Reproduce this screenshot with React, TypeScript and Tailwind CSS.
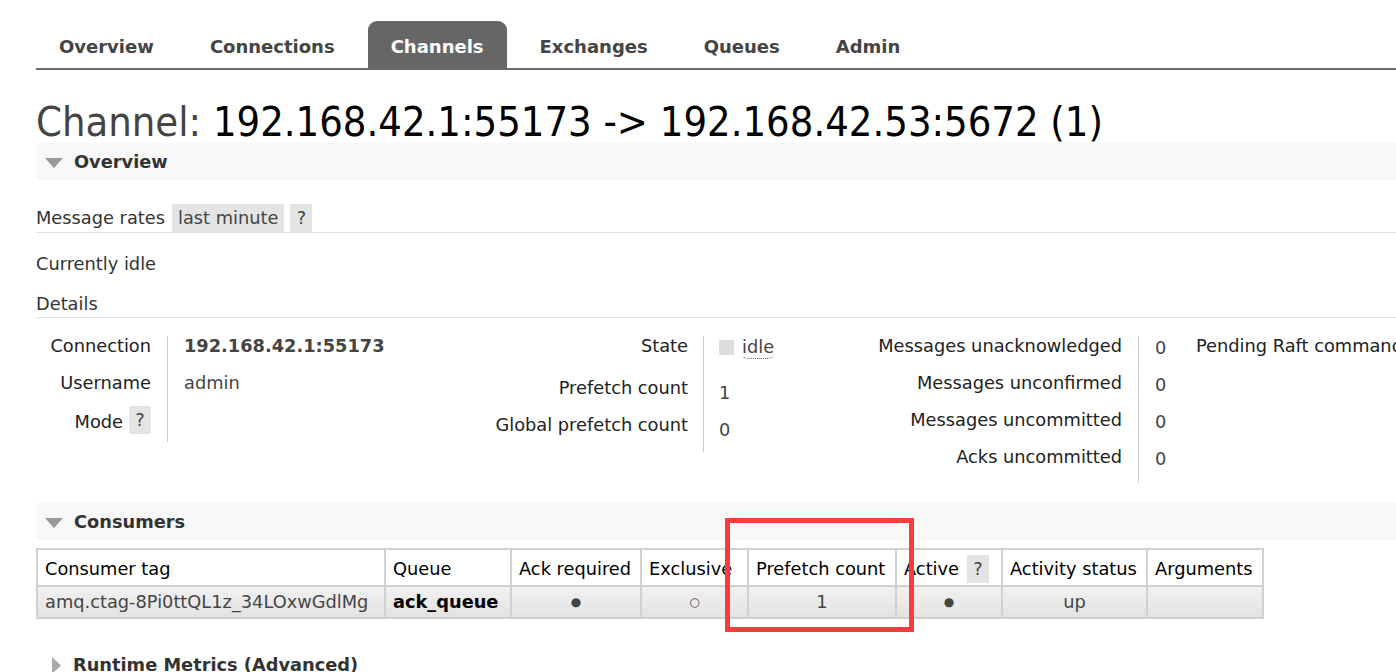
import React from "react";

const tabs = ["Overview", "Connections", "Channels", "Exchanges", "Queues", "Admin"];

function Help() {
  return (
    <span className="inline-flex h-[28px] w-[22px] items-center justify-center bg-[#e4e4e4] text-[#444]">
      ?
    </span>
  );
}

function SectionHeader({ title, open = true }: { title: string; open?: boolean }) {
  return (
    <div className={`flex h-[37px] items-center pt-[2px] ${open ? "bg-[#f8f8f8]" : ""}`}>
      {open ? (
        <svg width="18" height="10" viewBox="0 0 18 10" className="ml-[9px] mr-[11px]">
          <polygon points="0,0 18,0 9,10" fill="#999" />
        </svg>
      ) : (
        <svg width="9" height="17" viewBox="0 0 9 17" className="ml-[16px] mr-[12px]">
          <polygon points="0,0 9,8.5 0,17" fill="#aaa" />
        </svg>
      )}
      <span className="font-bold text-[#333]">{title}</span>
    </div>
  );
}

function Row({ h = 37, children }: { h?: number; children: React.ReactNode }) {
  return (
    <div className="leading-[20px]" style={{ height: h }}>
      {children}
    </div>
  );
}

export default function App() {
  const consumerCols = [
    { label: "Consumer tag", w: 348 },
    { label: "Queue", w: 126 },
    { label: "Ack required", w: 130 },
    { label: "Exclusive", w: 107 },
    { label: "Prefetch count", w: 148 },
    { label: "Active", w: 106, help: true },
    { label: "Activity status", w: 145 },
    { label: "Arguments", w: 116 },
  ];

  return (
    <div
      className="relative h-[672px] w-[1396px] overflow-hidden bg-white pl-[36px] text-[17.8px] text-[#333]"
      style={{ fontFamily: '"DejaVu Sans", Verdana, sans-serif' }}
    >
      {/* tabs */}
      <div className="flex h-[70px] items-end border-b-2 border-[#6a6a6a] pt-[21px]">
        {tabs.map((t) => (
          <div
            key={t}
            className={`mr-[10px] flex h-[47px] items-center rounded-t-[9px] px-[23px] pt-[3px] text-[18px] font-bold ${
              t === "Channels" ? "bg-[#666] text-white" : "text-[#444]"
            }`}
          >
            {t}
          </div>
        ))}
      </div>

      {/* title */}
      <h1
        className="mt-[29px] h-[44px] whitespace-nowrap text-[41.3px] leading-[46px] text-black"
        style={{ fontFamily: '"DejaVu Sans Condensed", "DejaVu Sans", sans-serif' }}
      >
        <span className="text-[#444]">Channel: </span>
        192.168.42.1:55173 -&gt; 192.168.42.53:5672 (1)
      </h1>

      <SectionHeader title="Overview" />

      <div className="mt-[24px] flex h-[29px] items-start border-b border-[#e0e0e0]">
        <span className="flex h-[28px] items-center pr-[7px] pt-[1px]">Message rates</span>
        <span className="mr-[6px] flex h-[28px] items-center bg-[#e4e4e4] px-[6px] pt-[1px] text-[#444]">
          last minute
        </span>
        <Help />
      </div>

      <div className="flex h-[60px] items-center pt-[2px]">Currently idle</div>

      <div className="flex h-[25px] items-start border-b border-[#e0e0e0] pt-[1px] leading-[20px]">
        Details
      </div>

      {/* details */}
      <div className="mt-[18px] flex whitespace-nowrap">
        <div className="w-[131px] shrink-0 pr-[16px] text-right text-[#222]">
          <Row>Connection</Row>
          <Row>Username</Row>
          <Row h={32}>
            <span className="inline-flex items-center">
              Mode <span className="-mt-[4px] ml-[6px]"><Help /></span>
            </span>
          </Row>
        </div>
        <div className="h-[106px] w-[253px] shrink-0 border-l border-[#ccc] pl-[16px] text-[#444]">
          <Row>
            <span className="font-bold">192.168.42.1:55173</span>
          </Row>
          <Row>admin</Row>
        </div>
        <div className="w-[283px] shrink-0 pr-[15px] text-right text-[#222]">
          <Row h={42}>State</Row>
          <Row>Prefetch count</Row>
          <Row>Global prefetch count</Row>
        </div>
        <div className="h-[116px] w-[137px] shrink-0 border-l border-[#ccc] pl-[15px] text-[#444]">
          <Row h={42}>
            <span className="inline-flex items-center">
              <span className="mr-[8px] inline-block h-[15px] w-[15px] bg-[#ddd]" />
              <span className="rounded-b-[6px] border-b border-dotted border-[#555] leading-[22px]">
                idle
              </span>
            </span>
          </Row>
          <Row>
            <div className="pt-[5px]">1</div>
          </Row>
          <Row>
            <div className="pt-[5px]">0</div>
          </Row>
        </div>
        <div className="w-[298px] shrink-0 pr-[16px] text-right text-[#222]">
          <Row>Messages unacknowledged</Row>
          <Row>Messages unconfirmed</Row>
          <Row>Messages uncommitted</Row>
          <Row>Acks uncommitted</Row>
        </div>
        <div className="h-[147px] w-[42px] shrink-0 border-l border-[#ccc] pl-[16px] text-[#444]">
          <Row><div className="pt-[2px]">0</div></Row>
          <Row><div className="pt-[2px]">0</div></Row>
          <Row><div className="pt-[2px]">0</div></Row>
          <Row><div className="pt-[2px]">0</div></Row>
        </div>
        <div className="shrink-0 pl-[16px] text-[#222]">
          <Row>Pending Raft commands</Row>
        </div>
      </div>

      <div className="mt-[19px]">
        <SectionHeader title="Consumers" />
      </div>

      <table className="mt-[8px] table-fixed border-collapse whitespace-nowrap" style={{ width: 1226 }}>
        <colgroup>
          {consumerCols.map((c) => (
            <col key={c.label} style={{ width: c.w }} />
          ))}
        </colgroup>
        <thead>
          <tr className="h-[37px]">
            {consumerCols.map((c) => (
              <th
                key={c.label}
                className="overflow-hidden border-2 border-[#d0d0d0] px-[7px] pt-[3px] text-left font-normal text-black"
              >
                {c.help ? (
                  <span className="inline-flex items-center">
                    {c.label}
                    <span className="ml-[8px]">
                      <Help />
                    </span>
                  </span>
                ) : (
                  c.label
                )}
              </th>
            ))}
          </tr>
        </thead>
        <tbody>
          <tr className="h-[32px] bg-gradient-to-b from-[#f2f2f2] to-[#e2e2e2] text-[#444]">
            <td className="border-2 border-[#d0d0d0] px-[7px]">amq.ctag-8Pi0ttQL1z_34LOxwGdlMg</td>
            <td className="border-2 border-[#d0d0d0] px-[7px] font-bold text-black">ack_queue</td>
            <td className="border-2 border-[#d0d0d0] text-center text-[12px]">●</td>
            <td className="border-2 border-[#d0d0d0] text-center text-[12px]">○</td>
            <td className="border-2 border-[#d0d0d0] text-center">1</td>
            <td className="border-2 border-[#d0d0d0] text-center text-[12px]">●</td>
            <td className="border-2 border-[#d0d0d0] text-center">up</td>
            <td className="border-2 border-[#d0d0d0]"></td>
          </tr>
        </tbody>
      </table>

      <div className="mt-[27px]">
        <SectionHeader title="Runtime Metrics (Advanced)" open={false} />
      </div>

      {/* annotation */}
      <div className="absolute left-[725px] top-[518px] h-[114px] w-[189px] border-[5px] border-[#ff3a3a]" />
    </div>
  );
}
